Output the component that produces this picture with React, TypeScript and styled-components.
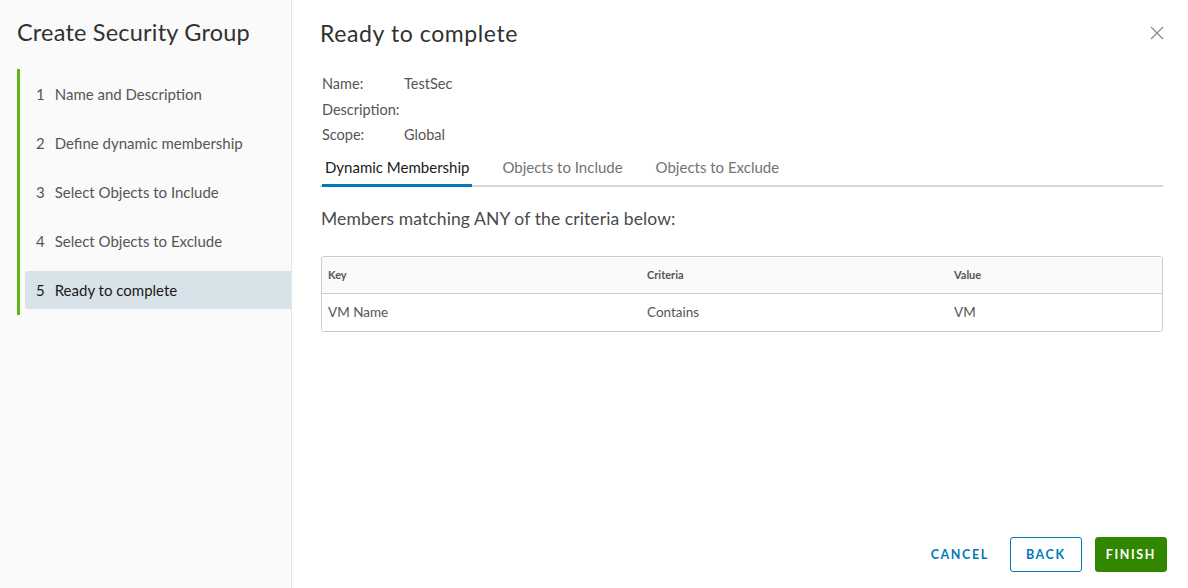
import styled, { createGlobalStyle } from "styled-components";

const Global = createGlobalStyle`
  html, body { margin: 0; padding: 0; background: #fff; }
  body { font-family: Lato, "Noto Sans", sans-serif; }
`;

const Shell = styled.div`
  display: flex;
  width: 1188px;
  height: 588px;
  overflow: hidden;
`;

const Sidebar = styled.div`
  width: 292px;
  flex: none;
  background: #fafafa;
  border-right: 1px solid #e6e6e6;
  padding: 18px 0 0 17px;
  box-sizing: border-box;
`;

const SideTitle = styled.h2`
  margin: 0 0 23px 0;
  font-size: 23.5px;
  font-weight: 400;
  color: #313131;
  letter-spacing: 0.2px;
`;

const Steps = styled.div`
  border-left: 3px solid #60b515;
  padding: 6px 0 6px 5px;
  display: flex;
  flex-direction: column;
  gap: 11px;
`;

const Step = styled.div<{ $active?: boolean }>`
  height: 38px;
  display: flex;
  align-items: center;
  padding-left: 11px;
  font-size: 15px;
  color: ${(p) => (p.$active ? "#1a1a1a" : "#565656")};
  background: ${(p) => (p.$active ? "#d8e3e9" : "transparent")};
  border-radius: 3px 0 0 3px;
  span { margin-right: 10px; }
`;

const Main = styled.div`
  flex: 1;
  display: flex;
  flex-direction: column;
  padding: 19px 21px 16px 28px;
  box-sizing: border-box;
`;

const Header = styled.div`
  display: flex;
  justify-content: space-between;
  align-items: center;
`;

const Title = styled.h1`
  margin: 0;
  font-size: 23px;
  font-weight: 400;
  color: #313131;
  letter-spacing: 0.6px;
`;

const Close = styled.button`
  border: none;
  background: none;
  padding: 0;
  width: 16px;
  height: 16px;
  margin-right: 2px;
  color: #8a8a8a;
  cursor: pointer;
`;

const Summary = styled.div`
  margin: 28px 0 0 2px;
  display: grid;
  grid-template-columns: 82px 1fr;
  row-gap: 7px;
  font-size: 14.5px;
  color: #565656;
  line-height: 18.5px;
`;

const Tabs = styled.div`
  display: flex;
  gap: 27px;
  margin: 10px 4px 0 0;
  border-bottom: 2px solid #d7d7d7;
`;

const Tab = styled.div<{ $active?: boolean }>`
  font-size: 15px;
  padding: 3px 3px 8px 3px;
  margin-bottom: -2px;
  color: ${(p) => (p.$active ? "#1a1a1a" : "#737373")};
  border-bottom: 3px solid ${(p) => (p.$active ? "#0079b8" : "transparent")};
  margin-left: ${(p) => (p.$active ? "2px" : "0")};
`;

const Lead = styled.p`
  margin: 21px 0 0 1px;
  font-size: 17.5px;
  color: #4a4a4a;
  letter-spacing: 0.1px;
`;

const Grid = styled.div`
  margin: 27px 4px 0 1px;
  border: 1px solid #cccccc;
  border-radius: 3px;
  overflow: hidden;
`;

const Row = styled.div<{ $head?: boolean }>`
  display: grid;
  grid-template-columns: 319px 307px 1fr;
  height: ${(p) => (p.$head ? "36px" : "37px")};
  align-items: center;
  background: ${(p) => (p.$head ? "#fafafa" : "#fff")};
  border-bottom: ${(p) => (p.$head ? "1px solid #cccccc" : "none")};
  font-size: ${(p) => (p.$head ? "11px" : "13.5px")};
  font-weight: ${(p) => (p.$head ? 700 : 400)};
  color: ${(p) => (p.$head ? "#555555" : "#565656")};
  div { padding-left: 6px; }
`;

const Footer = styled.div`
  margin-top: auto;
  display: flex;
  justify-content: flex-end;
  align-items: center;
  gap: 13px;
`;

const Btn = styled.button<{ $kind: "flat" | "outline" | "solid" }>`
  height: 35px;
  padding: 0 ${(p) => (p.$kind === "flat" ? "7px" : "10px")};
  min-width: ${(p) => (p.$kind === "flat" ? "0" : "72px")};
  font-family: Lato, "Noto Sans", sans-serif;
  font-size: 12.5px;
  font-weight: 700;
  letter-spacing: 1.6px;
  border-radius: 3px;
  cursor: pointer;
  color: ${(p) => (p.$kind === "solid" ? "#fff" : "#0079b8")};
  background: ${(p) => (p.$kind === "solid" ? "#318700" : "transparent")};
  border: 1px solid
    ${(p) =>
      p.$kind === "solid" ? "#318700" : p.$kind === "outline" ? "#0079b8" : "transparent"};
`;

const steps = [
  "Name and Description",
  "Define dynamic membership",
  "Select Objects to Include",
  "Select Objects to Exclude",
  "Ready to complete",
];

export default function App() {
  return (
    <Shell>
      <Global />
      <Sidebar>
        <SideTitle>Create Security Group</SideTitle>
        <Steps>
          {steps.map((s, i) => (
            <Step key={s} $active={i === 4}>
              <span>{i + 1}</span>
              {s}
            </Step>
          ))}
        </Steps>
      </Sidebar>
      <Main>
        <Header>
          <Title>Ready to complete</Title>
          <Close aria-label="Close">
            <svg width="16" height="16" viewBox="0 0 16 16">
              <path d="M2 2 L14 14 M14 2 L2 14" stroke="currentColor" strokeWidth="1.3" />
            </svg>
          </Close>
        </Header>
        <Summary>
          <span>Name:</span>
          <span>TestSec</span>
          <span>Description:</span>
          <span></span>
          <span>Scope:</span>
          <span>Global</span>
        </Summary>
        <Tabs>
          <Tab $active>Dynamic Membership</Tab>
          <Tab>Objects to Include</Tab>
          <Tab>Objects to Exclude</Tab>
        </Tabs>
        <Lead>Members matching ANY of the criteria below:</Lead>
        <Grid>
          <Row $head>
            <div>Key</div>
            <div>Criteria</div>
            <div>Value</div>
          </Row>
          <Row>
            <div>VM Name</div>
            <div>Contains</div>
            <div>VM</div>
          </Row>
        </Grid>
        <Footer>
          <Btn $kind="flat">CANCEL</Btn>
          <Btn $kind="outline">BACK</Btn>
          <Btn $kind="solid">FINISH</Btn>
        </Footer>
      </Main>
    </Shell>
  );
}
